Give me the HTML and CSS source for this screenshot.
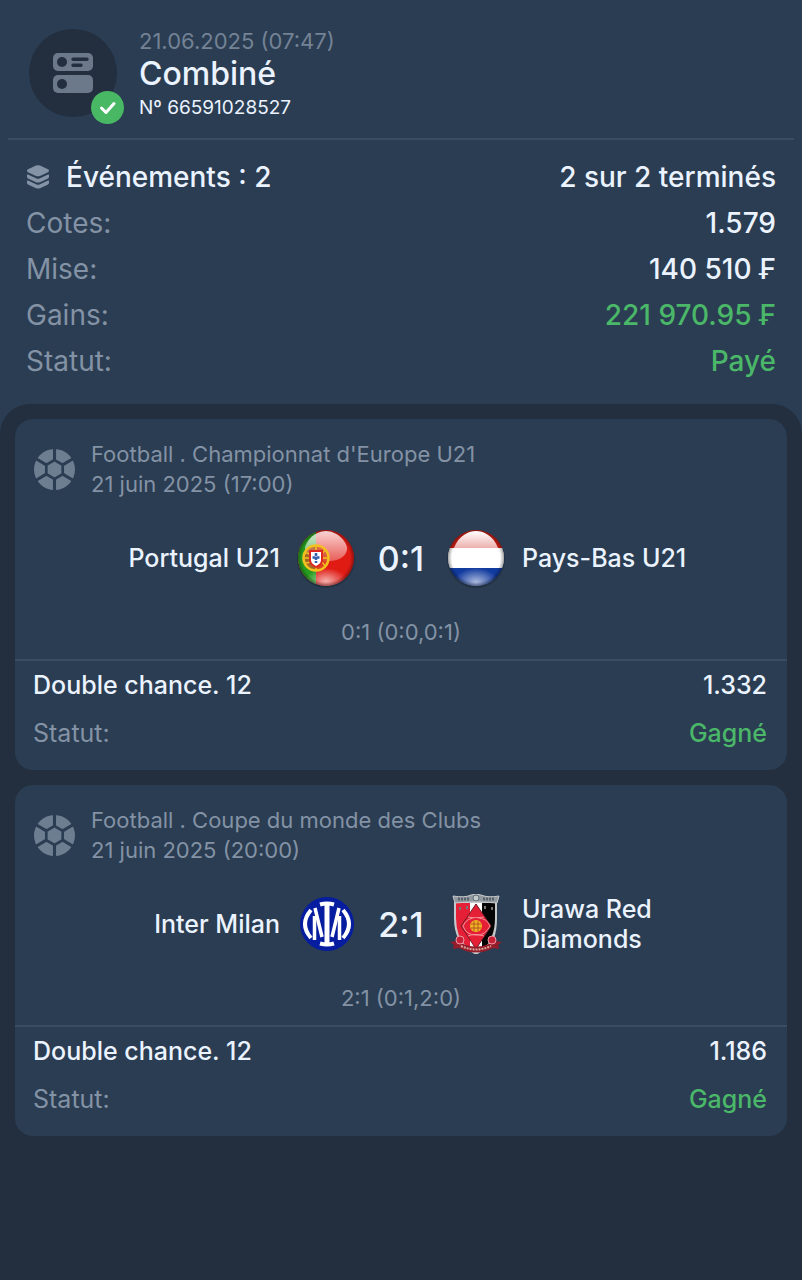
FILE: index.html
```html
<!DOCTYPE html>
<html lang="fr">
<head>
    <meta charset="UTF-8">
    <meta name="viewport" content="width=device-width, initial-scale=1.0">
    <title>Combiné</title>
    <link rel="stylesheet" href="styles.css">
</head>
<body>
    <header class="ticket">
        <div class="ticket-icon">
            <svg width="40" height="40" viewBox="0 0 40 40">
                <rect width="40" height="18" rx="5" fill="#6c798a"/>
                <rect y="22" width="40" height="18" rx="5" fill="#6c798a"/>
                <circle cx="9" cy="9" r="5" fill="#232f3f"/>
                <circle cx="9" cy="31" r="5" fill="#232f3f"/>
                <path d="M20 6.3h14M20 12.2h8" stroke="#232f3f" stroke-width="3.4" stroke-linecap="round"/>
            </svg>
            <span class="badge">
                <svg width="33" height="33" viewBox="0 0 33 33">
                    <path d="M10.5 17l4.5 4.5 8-9" fill="none" stroke="#fff" stroke-width="3" stroke-linecap="round" stroke-linejoin="round"/>
                </svg>
            </span>
        </div>
        <div>
            <p class="ticket-date">21.06.2025 (07:47)</p>
            <h1>Combiné</h1>
            <p class="ticket-number">Nº 66591028527</p>
        </div>
    </header>

    <dl class="summary">
        <div class="row main">
            <dt>
                <svg width="24" height="24" viewBox="0 0 24 24" fill="#8593a6">
                    <path d="M10 .6Q12 -.2 14 .6L22 4.300Q24 5.800 22 7.300L14 10.900Q12 11.700 10 10.900L2 7.300Q0 5.800 2 4.300z"/>
                    <path id="layer" d="M1 9.800Q1.300 9.200 2.500 9.800L10.500 13.500Q12 14.100 13.500 13.500L21.500 9.800Q22.700 9.200 23 9.800V11.800Q23 12.800 22 13.400L14 17.200Q12 18 10 17.200L2 13.400Q1 12.800 1 11.800z"/>
                    <use href="#layer" y="6"/>
                </svg>
                Événements : 2
            </dt>
            <dd>2 sur 2 terminés</dd>
        </div>
        <div class="row"><dt>Cotes:</dt><dd>1.579</dd></div>
        <div class="row"><dt>Mise:</dt><dd>140 510 ₣</dd></div>
        <div class="row"><dt>Gains:</dt><dd class="win">221 970.95 ₣</dd></div>
        <div class="row"><dt>Statut:</dt><dd class="win">Payé</dd></div>
    </dl>

    <main class="events">
        <article class="card">
            <div class="card-head">
                <svg class="ball" viewBox="0 0 40 40">
                    <circle cx="20" cy="20" r="20" fill="#6e7e91"/>
                    <path d="M20 0v11M20 29v11M12 15.500L2 9.500M28 15.500l10-6M12 24.500L2 30.500M28 24.500l10 6" stroke="#2a3d52" stroke-width="3"/>
                    <path d="M20 10.800l8 4.600v9.200l-8 4.600-8-4.600v-9.200z" fill="#6e7e91" stroke="#2a3d52" stroke-width="2.600"/>
                </svg>
                <div>
                    <p>Football . Championnat d'Europe U21</p>
                    <p>21 juin 2025 (17:00)</p>
                </div>
            </div>
            <div class="match">
                <span class="team home">Portugal U21</span>
                <svg class="logo" viewBox="0 0 60 60">
                    <defs>
                        <clipPath id="round"><circle cx="30" cy="30" r="28"/></clipPath>
                        <linearGradient id="gloss" x1="0" y1="0" x2="0" y2="1">
                            <stop offset="0" stop-color="#fff" stop-opacity=".95"/>
                            <stop offset="1" stop-color="#fff" stop-opacity=".35"/>
                        </linearGradient>
                        <linearGradient id="gloss-strong" x1="0" y1="0" x2="0" y2="1">
                            <stop offset="0" stop-color="#fff"/>
                            <stop offset="1" stop-color="#fff" stop-opacity=".65"/>
                        </linearGradient>
                        <radialGradient id="shine">
                            <stop offset="0" stop-color="#fff" stop-opacity=".65"/>
                            <stop offset="1" stop-color="#fff" stop-opacity="0"/>
                        </radialGradient>
                        <radialGradient id="edge">
                            <stop offset=".86" stop-color="#000" stop-opacity="0"/>
                            <stop offset="1" stop-color="#000" stop-opacity=".35"/>
                        </radialGradient>
                    </defs>
                    <circle cx="30" cy="31" r="29" fill="#233243"/>
                    <g clip-path="url(#round)">
                        <path fill="#e01b14" d="M0 0h60v60H0z"/>
                        <path fill="#269b1f" d="M0 0h20v60H0z"/>
                        <ellipse cx="30" cy="53" rx="21" ry="13" fill="url(#shine)"/>
                        <circle cx="30" cy="30" r="28" fill="url(#edge)"/>
                        <path d="M9 19C14 6 24 3 30 3s17 4 21 16c1 8-7 14-18 14C22 33 8 28 9 19z" fill="url(#gloss)" opacity=".85"/>
                        <circle cx="20" cy="30" r="12.500" fill="#d9532a" fill-opacity=".7" stroke="#f2c11e" stroke-width="2.500"/>
                        <path d="M9 25c7 0 16 6 20 13M9 35c7 0 16-6 20-13M20 17v26M8 30h24" fill="none" stroke="#f2c11e" stroke-width="1.500"/>
                        <path d="M13 22h14v10c0 4-3 6-7 8-4-2-7-4-7-8z" fill="#dc2820"/>
                        <path d="M15 24h10v8c0 3-2 4-5 6-3-2-5-3-5-6z" fill="#fff"/>
                        <path d="M20 25v10M16.500 29.500h7" stroke="#345eae" stroke-width="2.600" stroke-dasharray="3 1"/>
                    </g>
                </svg>
                <span class="score">0:1</span>
                <svg class="logo" viewBox="0 0 60 60">
                    <circle cx="30" cy="31" r="29" fill="#233243"/>
                    <g clip-path="url(#round)">
                        <path fill="#c91e16" d="M0 0h60v21H0z"/>
                        <path fill="#fff" d="M0 20h60v20H0z"/>
                        <path fill="#123b9f" d="M0 40h60v20H0z"/>
                        <ellipse cx="30" cy="54" rx="22" ry="14" fill="url(#shine)"/>
                        <circle cx="30" cy="30" r="28" fill="url(#edge)"/>
                        <path d="M8 20C13 7 23 3 30 3s17 4 22 17z" fill="url(#gloss-strong)"/>
                    </g>
                </svg>
                <span class="team">Pays-Bas U21</span>
            </div>
            <p class="periods">0:1 (0:0,0:1)</p>
            <dl class="bet">
                <div class="row main"><dt>Double chance. 12</dt><dd>1.332</dd></div>
                <div class="row"><dt>Statut:</dt><dd class="win">Gagné</dd></div>
            </dl>
        </article>

        <article class="card">
            <div class="card-head">
                <svg class="ball" viewBox="0 0 40 40">
                    <circle cx="20" cy="20" r="20" fill="#6e7e91"/>
                    <path d="M20 0v11M20 29v11M12 15.500L2 9.500M28 15.500l10-6M12 24.500L2 30.500M28 24.500l10 6" stroke="#2a3d52" stroke-width="3"/>
                    <path d="M20 10.800l8 4.600v9.200l-8 4.600-8-4.600v-9.200z" fill="#6e7e91" stroke="#2a3d52" stroke-width="2.600"/>
                </svg>
                <div>
                    <p>Football . Coupe du monde des Clubs</p>
                    <p>21 juin 2025 (20:00)</p>
                </div>
            </div>
            <div class="match">
                <span class="team home">Inter Milan</span>
                <svg class="logo" viewBox="0 0 60 60">
                    <circle cx="31" cy="30" r="27" fill="#061da0"/>
                    <g fill="none" stroke="#fff">
                        <path d="M31 10v40" stroke-width="5"/>
                        <path d="M24 10.500q7-2 14 0M24 49.500q7 2 14 0" stroke-width="4"/>
                        <path d="M15 16q-12 14 0 28M47 16q12 14 0 28" stroke-width="4"/>
                        <path d="M18.500 46V22M43.500 46V22" stroke-width="3.500"/>
                        <path d="M19 14L26 43M43 14L36 43" stroke-width="3.500"/>
                    </g>
                </svg>
                <span class="score">2:1</span>
                <svg class="logo" viewBox="0 0 60 60">
                    <path d="M8 8h43v16q0 12-3 20-4 9-18 17Q16 53 12 44 8 36 8 24z" fill="#c5c9cc"/>
                    <path d="M10 9h15v46q-9-5-12-13-3-9-3-18z" fill="#e51f35"/>
                    <path d="M24 9h12v47l-6 3-6-3z" fill="#fff"/>
                    <path d="M36 9h13v15q0 10-3 18-2 8-10 13z" fill="#050505"/>
                    <path d="M30 10l15 22-15 23-15-23z" fill="#e51f35" stroke="#721c29"/>
                    <path d="M7 2q12 2 18-1 5-2 10 0 7 3 18 1l-2 7q-21-3-42 0z" fill="#929a9f" stroke="#c5c9cc"/>
                    <path d="M12 5h11M37 5h11" stroke="#56636b" stroke-width="3" stroke-dasharray="2 1"/>
                    <circle cx="30" cy="4" r="3" fill="#c3c9c8" stroke="#617078"/>
                    <path d="M14 13v3M21 12v3M39 12v3M46 13v3" stroke="#777" stroke-width="2"/>
                    <path d="M17 32q4-9 14-8 10 0 13 8-5 10-14 9-10 0-13-9zM22 23q6 2 16 0M22 42q6-3 16 0" fill="none" stroke="#f5949c"/>
                    <circle cx="30" cy="32" r="8" fill="#e51f35"/>
                    <circle cx="30" cy="32" r="6" fill="#efb323"/>
                    <path d="M25 30h10M25 34h10M28 27v10M32 27v10" stroke="#a33922" stroke-width=".7"/>
                    <path d="M4 48l7-1q19 11 38 0l7 1-4 3 1 4-6-1q-17 9-34 0l-6 1 1-4z" fill="#941d2b"/>
                    <path d="M15 52q15 7 30 0" fill="none" stroke="#dca79a" stroke-width="2" stroke-dasharray="2 1"/>
                    <g fill="#c71f36" stroke="#f09aa3">
                        <circle cx="14" cy="46" r="4"/>
                        <circle cx="46" cy="46" r="4"/>
                    </g>
                </svg>
                <span class="team">Urawa Red Diamonds</span>
            </div>
            <p class="periods">2:1 (0:1,2:0)</p>
            <dl class="bet">
                <div class="row main"><dt>Double chance. 12</dt><dd>1.186</dd></div>
                <div class="row"><dt>Statut:</dt><dd class="win">Gagné</dd></div>
            </dl>
        </article>
    </main>
</body>
</html>
```
FILE: styles.css
```css
* {
    box-sizing: border-box;
}
body {
    margin: 0;
    min-height: 100vh;
    display: flex;
    flex-direction: column;
    background-color: #2a3d52;
    color: #ebf3ff;
    font-family: Inter, "Liberation Sans", sans-serif;
}
h1, p, dl, dd {
    margin: 0;
}
svg {
    display: block;
    flex-shrink: 0;
}
.ticket {
    display: flex;
    gap: 22px;
    margin: 0 8px;
    padding: 26px 21px 14px;
    border-bottom: 2px solid #3a4c61;
}
.ticket-icon {
    position: relative;
    display: flex;
    align-items: center;
    justify-content: center;
    width: 88px;
    height: 88px;
    margin-top: 3px;
    border-radius: 50%;
    background-color: #232f3f;
}
.badge {
    position: absolute;
    right: -7px;
    bottom: -7px;
    border-radius: 50%;
    background-color: #48b864;
}
.ticket-date {
    color: #748295;
    font-size: 22px;
    line-height: 30px;
}
h1 {
    font-size: 32px;
    font-weight: 500;
    line-height: 36px;
}
.ticket-number {
    font-size: 19px;
    line-height: 32px;
}
.row {
    display: flex;
    justify-content: space-between;
    color: #8492a5;
}
.row dt {
    display: flex;
    align-items: center;
    gap: 16px;
}
.row dd, .main {
    color: #ebf3ff;
    font-weight: 500;
}
.row .win {
    color: #4bb768;
}
.summary {
    padding: 14px 26px 20px;
    font-size: 28px;
    line-height: 46px;
}
.events {
    flex: 1;
    display: flex;
    flex-direction: column;
    gap: 15px;
    padding: 15px;
    border-radius: 30px 30px 0 0;
    background-color: #232f3f;
}
.card {
    padding: 20px 0 13px;
    border-radius: 18px;
    background-color: #2a3d52;
}
.card-head {
    display: flex;
    align-items: center;
    gap: 16px;
    padding: 0 19px;
    color: #8492a5;
    font-size: 22px;
    line-height: 30px;
}
.ball {
    width: 41px;
    height: 41px;
}
.match {
    display: grid;
    grid-template-columns: 1fr 60px 58px 60px 1fr;
    align-items: center;
    gap: 16px;
    height: 80px;
    margin: 19px 0;
    padding: 0 20px;
}
.team {
    font-size: 25px;
    font-weight: 500;
    line-height: 30px;
}
.home {
    text-align: right;
}
.logo {
    width: 60px;
    height: 60px;
}
.score {
    font-size: 34px;
    font-weight: 500;
    text-align: center;
    white-space: nowrap;
}
.periods {
    color: #8492a5;
    font-size: 22px;
    line-height: 30px;
    text-align: center;
}
.bet {
    margin-top: 12px;
    padding: 0 20px 0 18px;
    border-top: 2px solid #3a4c61;
    font-size: 25px;
    line-height: 48px;
}
```
